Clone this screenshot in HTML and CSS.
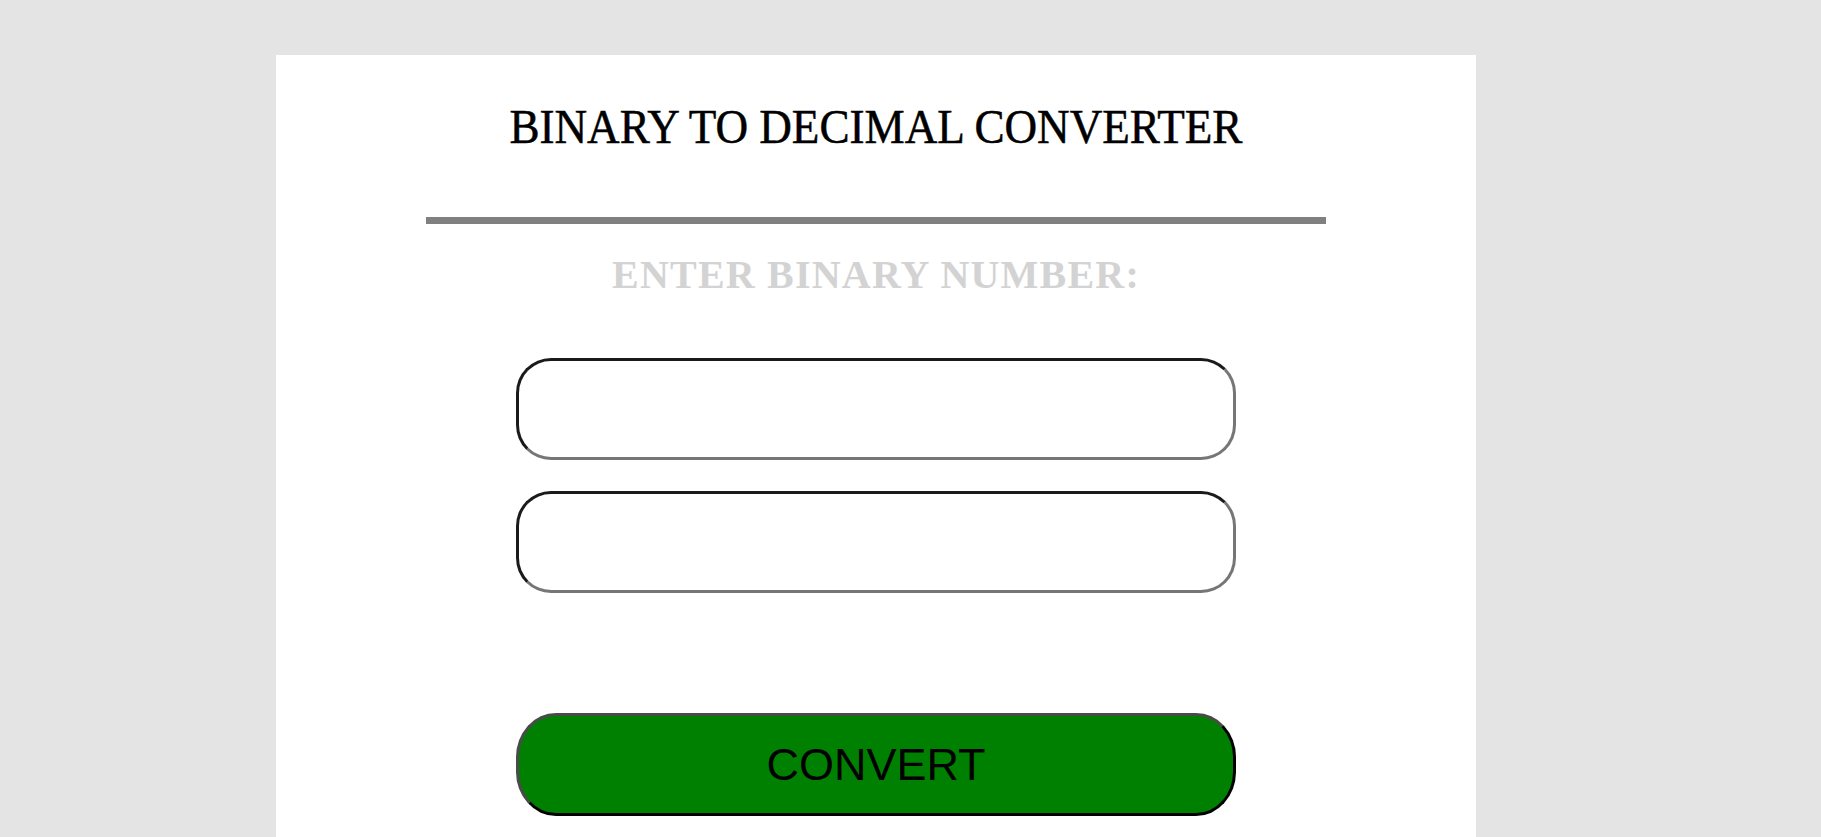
FILE: index.html
```html
<!DOCTYPE html>
<html lang="en">
<head>
<meta charset="utf-8">
<title>Binary to Decimal Converter</title>
<link rel="stylesheet" href="styles.css">
</head>
<body>
  <main class="card">
    <h1 class="title">BINARY TO DECIMAL CONVERTER</h1>
    <div class="rule"></div>
    <h2 class="label">ENTER BINARY NUMBER:</h2>
    <input class="field field-first" type="text">
    <input class="field field-second" type="text">
    <button class="convert" type="button">CONVERT</button>
  </main>
</body>
</html>
```

FILE: styles.css
```css
html, body {
  margin: 0;
  padding: 0;
}

body {
  background: #e4e4e4;
  height: 837px;
  overflow: hidden;
}

.card {
  box-sizing: border-box;
  width: 1200px;
  height: 782px;
  margin: 55px 0 0 276px;
  padding-top: 44px;
  background: #ffffff;
  display: flex;
  flex-direction: column;
  align-items: center;
}

.title {
  margin: 0;
  font-family: "Liberation Serif", "Times New Roman", serif;
  font-weight: normal;
  font-size: 48px;
  line-height: 56px;
  color: #000;
  text-align: center;
  white-space: nowrap;
  transform: scaleX(0.94);
  -webkit-text-stroke: 0.5px #000;
}

.rule {
  width: 900px;
  height: 7px;
  margin-top: 62px;
  background: #808080;
}

.label {
  margin: 28px 0 0;
  font-family: "Liberation Serif", "Times New Roman", serif;
  font-weight: bold;
  font-size: 40px;
  line-height: 46px;
  letter-spacing: 1.2px;
  color: #d3d3d3;
  text-align: center;
}

.field {
  box-sizing: border-box;
  width: 720px;
  height: 102px;
  margin: 0;
  padding: 0 20px;
  border: 3px solid;
  border-color: #1a1a1a #767676 #767676 #1a1a1a;
  border-radius: 35px;
  background: #fff;
  font-family: "Liberation Sans", Arial, sans-serif;
  font-size: 30px;
  outline: none;
}

.field-first {
  margin-top: 60px;
}

.field-second {
  margin-top: 31px;
}

.convert {
  box-sizing: border-box;
  width: 720px;
  height: 103px;
  margin-top: 120px;
  padding: 0;
  border: 3px solid;
  border-color: #4a4a4a #000 #000 #4a4a4a;
  border-radius: 40px / 44px;
  background: #008000;
  color: #000;
  font-family: "Liberation Sans", Arial, sans-serif;
  font-size: 45px;
  cursor: pointer;
}
```
